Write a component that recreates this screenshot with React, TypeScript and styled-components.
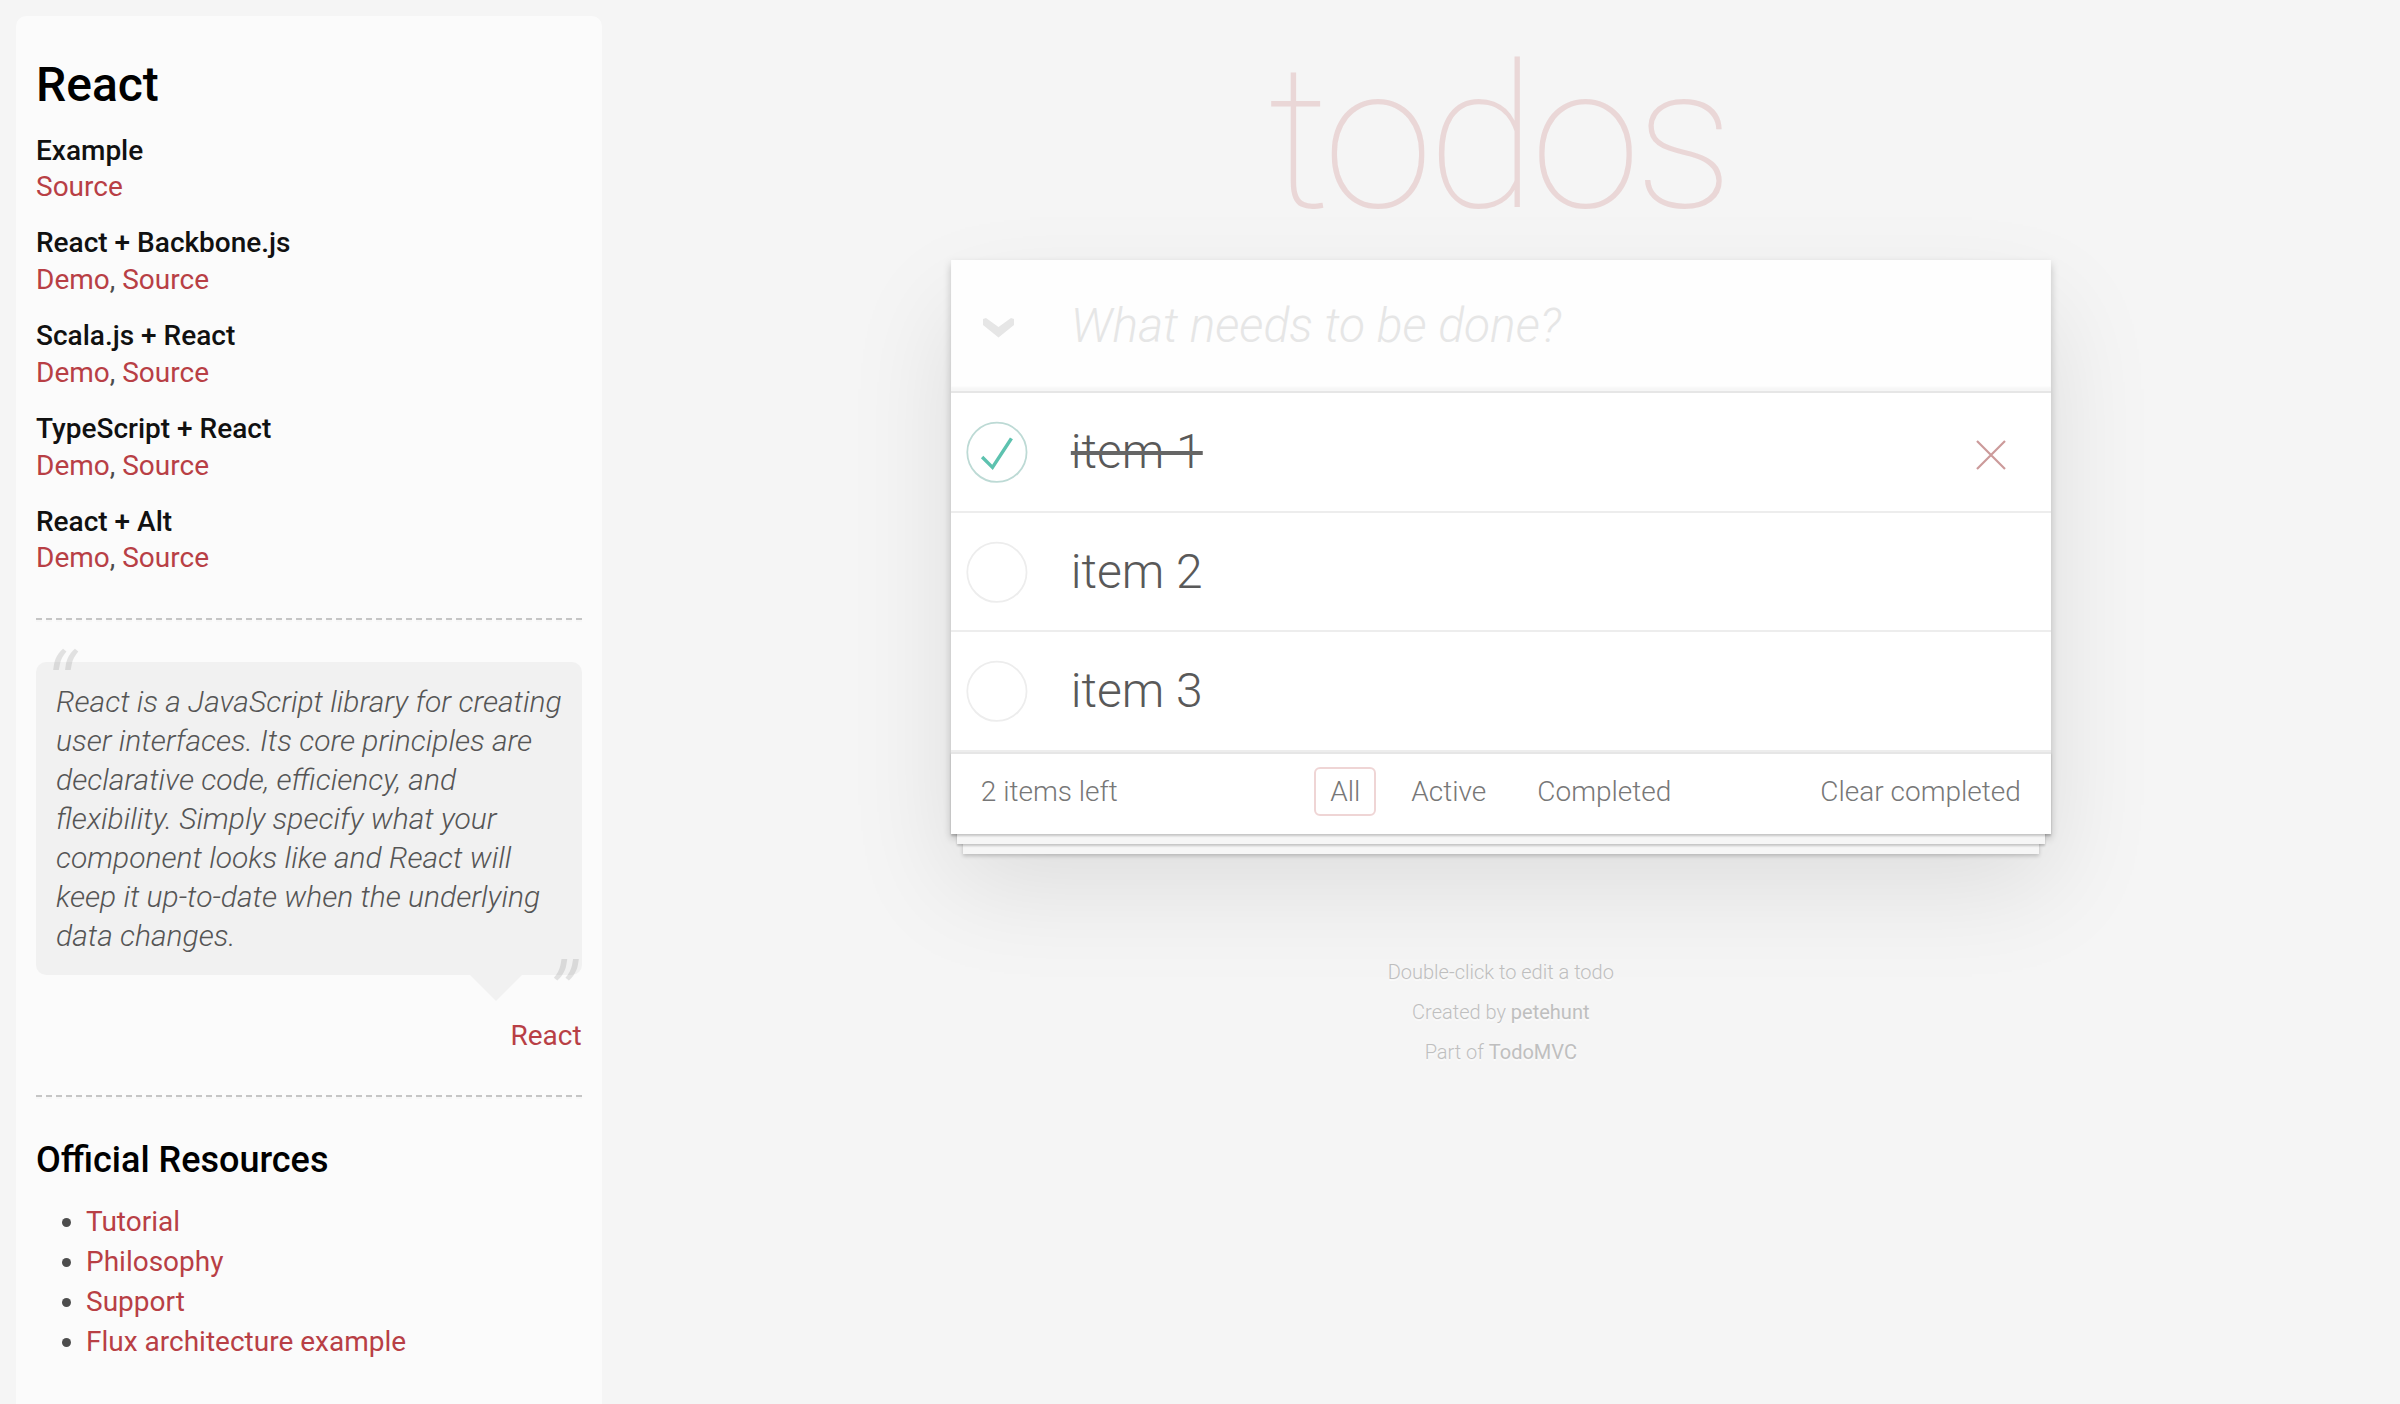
import styled, { createGlobalStyle } from 'styled-components';

const GlobalStyle = createGlobalStyle`
  html, body {
    margin: 0;
    padding: 0;
    height: 100%;
    overflow: hidden;
  }
  body {
    background: #f5f5f5;
    color: #4d4d4d;
    font-family: Roboto, "Liberation Sans", sans-serif;
    font-weight: 300;
    -webkit-font-smoothing: antialiased;
  }
  * {
    box-sizing: border-box;
  }
`;

const Page = styled.div`
  display: flex;
  align-items: flex-start;
  height: 1404px;
  overflow: hidden;
`;

/* ---------- learn sidebar ---------- */

const Sidebar = styled.aside`
  flex: 0 0 584px;
  margin: 16px 0 0 16px;
  padding: 20px;
  border-radius: 10px;
  background: rgba(255, 255, 255, 0.6);
  font-weight: 400;
`;

const SideTitle = styled.h3`
  margin: 20px 0;
  font-size: 48px;
  line-height: 57.6px;
  font-weight: 500;
  color: #000;
`;

const ExampleName = styled.h5`
  margin: 20px 0 0;
  font-size: 28px;
  line-height: 33.6px;
  font-weight: 500;
  color: #111;
`;

const LinkLine = styled.div`
  font-size: 28px;
  line-height: 39.2px;
`;

const SideLink = styled.a`
  color: #b83f45;
  text-decoration: none;
  font-weight: 400;
`;

const Divider = styled.hr`
  margin: 40px 0;
  border: 0;
  border-top: 2px dashed #c5c5c5;
  border-bottom: 2px dashed #f7f7f7;
`;

const Quote = styled.blockquote`
  margin: 40px 0 0;
`;

const Bubble = styled.div`
  position: relative;
  padding: 20px;
  background: rgba(0, 0, 0, 0.04);
  border-radius: 10px;

  &::after {
    content: '';
    position: absolute;
    top: 100%;
    right: 60px;
    border: 26px solid transparent;
    border-top-color: rgba(0, 0, 0, 0.04);
  }
`;

const QuoteText = styled.p`
  margin: 0;
  font-size: 30px;
  line-height: 39px;
  font-style: italic;
  font-weight: 300;
  white-space: nowrap;
  color: #555;

  &::before,
  &::after {
    position: absolute;
    font-size: 100px;
    line-height: 130px;
    opacity: 0.15;
  }
  &::before {
    content: '“';
    top: -36px;
    left: 8px;
  }
  &::after {
    content: '”';
    bottom: -90px;
    right: 6px;
  }
`;

const Attribution = styled.div`
  margin-top: 41.4px;
  text-align: right;
  font-size: 28px;
  line-height: 39.2px;
`;

const ResourcesTitle = styled.h4`
  margin: 20px 0;
  font-size: 36px;
  line-height: 43.2px;
  font-weight: 500;
  color: #000;
`;

const ResourceList = styled.ul`
  margin: 0 0 60px 50px;
  padding: 0;
  font-size: 28px;

  li {
    line-height: 40px;
  }
`;

/* ---------- todo app ---------- */

const Main = styled.main`
  flex: 1;
  display: flex;
  flex-direction: column;
  align-items: center;
  padding-top: 39px;
`;

const Title = styled.h1`
  margin: 0;
  width: 1100px;
  height: 221px;
  padding-right: 6px;
  font-size: 200px;
  line-height: 200px;
  font-weight: 100;
  letter-spacing: -6px;
  text-align: center;
  color: rgba(175, 47, 47, 0.15);
`;

const Card = styled.section`
  position: relative;
  width: 1100px;
  background: #fff;
  box-shadow: 0 4px 8px 0 rgba(0, 0, 0, 0.2), 0 50px 100px 0 rgba(0, 0, 0, 0.1);
`;

const NewTodo = styled.header`
  display: flex;
  align-items: center;
  height: 131.2px;
  background: rgba(0, 0, 0, 0.003);
  box-shadow: inset 0 -4px 2px rgba(0, 0, 0, 0.03);
`;

const ToggleAll = styled.div`
  flex: 0 0 120px;
  display: flex;
  align-items: center;
  padding: 4px 0 0 32px;
`;

const NewTodoInput = styled.input`
  flex: 1;
  min-width: 0;
  padding: 0 32px 0 0;
  border: 0;
  outline: none;
  background: transparent;
  font-family: inherit;
  font-size: 48px;
  font-weight: 300;
  color: #4d4d4d;

  &::placeholder {
    font-style: italic;
    font-weight: 300;
    color: #e6e6e6;
  }
`;

const TodoList = styled.ul`
  margin: 0;
  padding: 0;
  list-style: none;
  border-top: 2px solid #e6e6e6;
`;

const TodoItem = styled.li`
  display: flex;
  align-items: center;
  border-bottom: 2px solid #ededed;
  font-size: 48px;
`;

const Toggle = styled.div`
  flex: 0 0 120px;
  display: flex;
  align-items: center;
`;

const TodoLabel = styled.label<{ $done?: boolean }>`
  flex: 1;
  padding: 30px 0;
  line-height: 57.6px;
  color: #595959;
  text-decoration: ${(p) => (p.$done ? 'line-through' : 'none')};
  text-decoration-thickness: 4px;
  text-decoration-color: #666;
`;

const DestroyButton = styled.button`
  width: 80px;
  height: 80px;
  margin: 6px 20px 0 0;
  padding: 0;
  display: flex;
  align-items: center;
  justify-content: center;
  border: 0;
  background: none;
`;

const Footer = styled.footer`
  display: grid;
  grid-template-columns: 1fr auto 1fr;
  align-items: center;
  height: 82px;
  padding: 0 30px 4px;
  border-top: 2px solid #e6e6e6;
  color: #777;
  font-size: 28px;
  line-height: 40px;
  box-shadow: 0 2px 2px rgba(0, 0, 0, 0.2), 0 16px 0 -6px #f6f6f6,
    0 18px 2px -6px rgba(0, 0, 0, 0.2), 0 32px 0 -12px #f6f6f6,
    0 34px 4px -12px rgba(0, 0, 0, 0.2);
`;

const Count = styled.span`
  justify-self: start;
`;

const Filters = styled.ul`
  display: flex;
  gap: 7px;
  margin: 0;
  padding: 0;
  list-style: none;
`;

const FilterLink = styled.a<{ $selected?: boolean }>`
  display: block;
  margin: 6px;
  padding: 6px 14px;
  line-height: 33px;
  border: 2px solid ${(p) => (p.$selected ? 'rgba(175, 47, 47, 0.2)' : 'transparent')};
  border-radius: 6px;
  color: inherit;
  text-decoration: none;
`;

const ClearCompleted = styled.button`
  justify-self: end;
  padding: 0;
  border: 0;
  background: none;
  font: inherit;
  color: inherit;
`;

const Info = styled.footer`
  margin-top: 128px;
  display: flex;
  flex-direction: column;
  align-items: center;
  gap: 20px;
  color: #bfbfbf;
  font-size: 20px;
  line-height: 20px;
  text-shadow: 0 2px 0 rgba(255, 255, 255, 0.5);

  p {
    margin: 0;
  }
`;

const InfoLink = styled.a`
  color: inherit;
  text-decoration: none;
  font-weight: 400;
`;

/* ---------- drawings ---------- */

function Chevron() {
  return (
    <svg width="31" height="20" viewBox="0 0 31 20">
      <polygon points="0,1 3,0 15.5,9 28,0 31,1 31,7 15.5,19.5 0,7" fill="#e6e6e6" />
    </svg>
  );
}

function CheckCircle({ done }: { done: boolean }) {
  return (
    <svg width="80" height="80" viewBox="-10 -18 100 135">
      <circle cx="50" cy="50" r="50" fill="none" stroke={done ? '#bddad5' : '#ededed'} strokeWidth="3" />
      {done && <path fill="#5dc2af" d="M72 25L42 71 27 56l-4 4 20 20 34-52z" />}
    </svg>
  );
}

function Cross() {
  return (
    <svg width="30" height="30" viewBox="0 0 30 30">
      <path d="M1 1L29 29M29 1L1 29" stroke="#cc9a9a" strokeWidth="2.2" />
    </svg>
  );
}

const examples = [
  { name: 'React + Backbone.js' },
  { name: 'Scala.js + React' },
  { name: 'TypeScript + React' },
  { name: 'React + Alt' },
];

const quoteLines = [
  'React is a JavaScript library for creating',
  'user interfaces. Its core principles are',
  'declarative code, efficiency, and',
  'flexibility. Simply specify what your',
  'component looks like and React will',
  'keep it up-to-date when the underlying',
  'data changes.',
];

const todos = [
  { title: 'item 1', done: true },
  { title: 'item 2', done: false },
  { title: 'item 3', done: false },
];

export default function App() {
  return (
    <>
      <GlobalStyle />
      <Page>
        <Sidebar>
          <SideTitle>React</SideTitle>
          <ExampleName>Example</ExampleName>
          <LinkLine>
            <SideLink href="#">Source</SideLink>
          </LinkLine>
          {examples.map((ex) => (
            <div key={ex.name}>
              <ExampleName>{ex.name}</ExampleName>
              <LinkLine>
                <SideLink href="#">Demo</SideLink>, <SideLink href="#">Source</SideLink>
              </LinkLine>
            </div>
          ))}
          <Divider />
          <Quote>
            <Bubble>
              <QuoteText>
                {quoteLines.map((line, i) => (
                  <span key={i}>
                    {line}
                    {i < quoteLines.length - 1 && <br />}
                  </span>
                ))}
              </QuoteText>
            </Bubble>
            <Attribution>
              <SideLink href="#">React</SideLink>
            </Attribution>
          </Quote>
          <Divider />
          <ResourcesTitle>Official Resources</ResourcesTitle>
          <ResourceList>
            <li><SideLink href="#">Tutorial</SideLink></li>
            <li><SideLink href="#">Philosophy</SideLink></li>
            <li><SideLink href="#">Support</SideLink></li>
            <li><SideLink href="#">Flux architecture example</SideLink></li>
          </ResourceList>
        </Sidebar>

        <Main>
          <Title>todos</Title>
          <Card>
            <NewTodo>
              <ToggleAll>
                <Chevron />
              </ToggleAll>
              <NewTodoInput placeholder="What needs to be done?" />
            </NewTodo>
            <TodoList>
              {todos.map((t, i) => (
                <TodoItem key={t.title}>
                  <Toggle>
                    <CheckCircle done={t.done} />
                  </Toggle>
                  <TodoLabel $done={t.done}>{t.title}</TodoLabel>
                  {i === 0 && (
                    <DestroyButton>
                      <Cross />
                    </DestroyButton>
                  )}
                </TodoItem>
              ))}
            </TodoList>
            <Footer>
              <Count>2 items left</Count>
              <Filters>
                <li><FilterLink href="#" $selected>All</FilterLink></li>
                <li><FilterLink href="#">Active</FilterLink></li>
                <li><FilterLink href="#">Completed</FilterLink></li>
              </Filters>
              <ClearCompleted>Clear completed</ClearCompleted>
            </Footer>
          </Card>
          <Info>
            <p>Double-click to edit a todo</p>
            <p>
              Created by <InfoLink href="#">petehunt</InfoLink>
            </p>
            <p>
              Part of <InfoLink href="#">TodoMVC</InfoLink>
            </p>
          </Info>
        </Main>
      </Page>
    </>
  );
}
